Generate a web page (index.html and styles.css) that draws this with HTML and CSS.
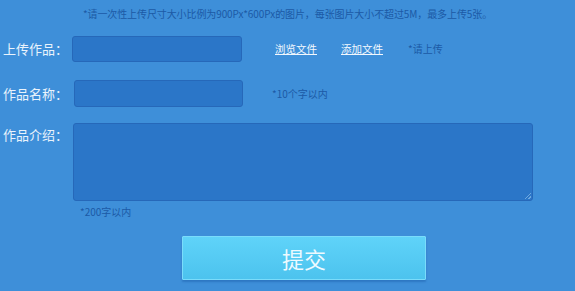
FILE: index.html
```html
<!DOCTYPE html>
<html lang="zh-CN">
<head>
<meta charset="utf-8">
<title>上传作品</title>
<link rel="stylesheet" href="styles.css">
</head>
<body>
<div class="page">
  <p class="notice">*请一次性上传尺寸大小比例为900Px*600Px的图片，每张图片大小不超过5M，最多上传5张。</p>
  <form class="form">
    <div class="row row-upload">
      <label class="label">上传作品：</label>
      <div class="input input-upload"></div>
      <a class="link link-browse" href="#">浏览文件</a>
      <a class="link link-add" href="#">添加文件</a>
      <span class="hint hint-upload">*请上传</span>
    </div>
    <div class="row row-name">
      <label class="label">作品名称：</label>
      <div class="input input-name"></div>
      <span class="hint hint-name">*10个字以内</span>
    </div>
    <div class="row row-desc">
      <label class="label">作品介绍：</label>
      <div class="desc-col">
        <div class="textarea"><span class="grip"></span></div>
        <span class="hint hint-desc">*200字以内</span>
      </div>
    </div>
    <div class="actions">
      <button type="button" class="submit">提交</button>
    </div>
  </form>
</div>
</body>
</html>
```
FILE: styles.css
```css
* { box-sizing: border-box; }
html, body {
  margin: 0;
  padding: 0;
  width: 575px;
  height: 291px;
  overflow: hidden;
  background: #3e8fd9;
  font-family: "Noto Sans CJK SC", "Noto Sans", sans-serif;
}
.page {
  padding-top: 7px;
}
.notice {
  margin: 0;
  height: 14px;
  line-height: 14px;
  font-size: 10px;
  color: #1c5aa6;
  text-align: center;
  letter-spacing: -0.1px;
}
.form {
  display: flex;
  flex-direction: column;
  padding-left: 3px;
}
.row {
  display: flex;
  align-items: center;
}
.label {
  width: 70px;
  font-size: 13px;
  color: #e9f3fc;
  letter-spacing: 0;
  line-height: 26px;
}
.input {
  background: #2b76c8;
  border: 1px solid #2668b9;
  border-radius: 3px;
  height: 26px;
}
.row-upload { margin-top: 15px; }
.input-upload { width: 170px; margin-left: -1px; }
.link {
  font-size: 10.5px;
  color: #f2f8fe;
  text-decoration: underline;
  line-height: 14px;
}
.link-browse { margin-left: 33px; }
.link-add { margin-left: 24px; }
.hint {
  font-size: 10px;
  color: #1c5aa6;
  line-height: 14px;
}
.hint-upload { margin-left: 25px; }
.row-name { margin-top: 18px; }
.input-name { width: 169px; height: 27px; margin-left: 1px; }
.hint-name { margin-left: 29px; }
.row-desc {
  margin-top: 16px;
  align-items: flex-start;
}
.row-desc .label { margin-top: -1px; }
.desc-col {
  display: flex;
  flex-direction: column;
  margin-left: 0;
}
.textarea {
  position: relative;
  width: 460px;
  height: 78px;
  background: #2b76c8;
  border: 1px solid #2668b9;
  border-radius: 3px;
}
.grip {
  position: absolute;
  right: 1px;
  bottom: 1px;
  width: 6px;
  height: 6px;
  background: linear-gradient(135deg, transparent 45%, #6da8e0 45%, #6da8e0 55%, transparent 55%, transparent 75%, #6da8e0 75%, #6da8e0 85%, transparent 85%);
}
.hint-desc {
  margin-top: 4px;
  margin-left: 7px;
}
.actions {
  display: flex;
  margin-top: 17px;
  padding-left: 179px;
}
.submit {
  width: 244px;
  height: 44px;
  border: 1px solid #7adcfb;
  border-radius: 1px;
  background: linear-gradient(#5fd3f9, #4cc3ee);
  box-shadow: 0 2px 2px #2e78c3;
  color: #eefaff;
  font-family: "Noto Sans CJK SC", sans-serif;
  font-size: 22px;
  line-height: 40px;
  padding: 0;
  letter-spacing: 0;
}
```
